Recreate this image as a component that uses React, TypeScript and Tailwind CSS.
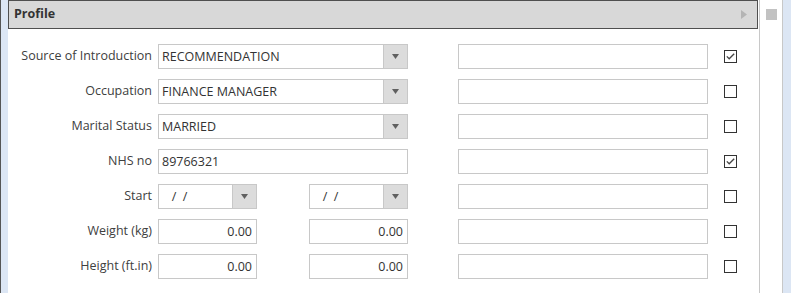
import { ReactNode } from "react";

function Arrow() {
  return (
    <svg width="7" height="5" viewBox="0 0 7 5">
      <path d="M0 0 H7 L3.5 5 Z" fill="#606060" />
    </svg>
  );
}

function Combo({ value, width }: { value: string; width: string }) {
  return (
    <div className={`flex h-[25px] ${width} border border-[#c8c8c8] bg-white`}>
      <div className="flex-1 whitespace-pre pl-[3px] leading-[23px] text-[#333]">{value}</div>
      <div className="flex w-[24px] items-center justify-center border-l border-[#c8c8c8] bg-[#dcdcdc]">
        <Arrow />
      </div>
    </div>
  );
}

function Field({ value = "", right = false, width = "w-[250px]" }: { value?: string; right?: boolean; width?: string }) {
  return (
    <div
      className={`h-[25px] ${width} border border-[#c8c8c8] bg-white leading-[23px] text-[#333] ${
        right ? "pr-[4px] text-right" : "pl-[3px]"
      }`}
    >
      {value}
    </div>
  );
}

function Check({ checked }: { checked?: boolean }) {
  return (
    <div className="flex h-[13px] w-[13px] items-center justify-center border border-[#333] bg-white">
      {checked && (
        <svg width="9" height="7" viewBox="0 0 9 7">
          <path d="M0.8 3.4 L3.2 5.8 L8.2 0.8" stroke="#444" strokeWidth="1.3" fill="none" />
        </svg>
      )}
    </div>
  );
}

function Row({ label, children, checked }: { label: string; children: ReactNode; checked?: boolean }) {
  return (
    <div className="flex h-[25px] items-center">
      <div className="w-[145px] pr-[1px] text-right text-[#404040]">{label}</div>
      <div className="ml-[5px] w-[250px]">{children}</div>
      <div className="ml-[50px]">
        <Field />
      </div>
      <div className="ml-[16px]">
        <Check checked={checked} />
      </div>
    </div>
  );
}

export default function App() {
  return (
    <div
      className="flex h-[293px] w-[791px] overflow-hidden bg-white text-[12.5px]"
      style={{ fontFamily: '"Open Sans", "Liberation Sans", sans-serif' }}
    >
      <div className="w-[8px] border-l border-[#555] bg-[#dce6f4]" />
      <div className="flex w-[750px] flex-col">
        <div className="flex h-[29px] items-center justify-between border border-[#4f4f4f] bg-[#d8d8d8] pl-[5px] pr-[10px]">
          <span className="font-bold text-[#333]">Profile</span>
          <svg width="6" height="9" viewBox="0 0 6 9">
            <path d="M0 0 L6 4.5 L0 9 Z" fill="#b4b4b4" />
          </svg>
        </div>
        <div className="flex flex-col gap-[10px] pt-[15px]">
          <Row label="Source of Introduction" checked>
            <Combo value="RECOMMENDATION" width="w-[250px]" />
          </Row>
          <Row label="Occupation">
            <Combo value="FINANCE MANAGER" width="w-[250px]" />
          </Row>
          <Row label="Marital Status">
            <Combo value="MARRIED" width="w-[250px]" />
          </Row>
          <Row label="NHS no" checked>
            <Field value="89766321" />
          </Row>
          <Row label="Start">
            <div className="flex justify-between">
              <Combo value="   /  /" width="w-[99px]" />
              <Combo value="   /  /" width="w-[99px]" />
            </div>
          </Row>
          <Row label="Weight (kg)">
            <div className="flex justify-between">
              <Field value="0.00" right width="w-[99px]" />
              <Field value="0.00" right width="w-[99px]" />
            </div>
          </Row>
          <Row label="Height (ft.in)">
            <div className="flex justify-between">
              <Field value="0.00" right width="w-[99px]" />
              <Field value="0.00" right width="w-[99px]" />
            </div>
          </Row>
        </div>
      </div>
      <div className="ml-[1px] flex w-[23px] justify-center border-l border-[#c8c8c8] pt-[9px]">
        <div className="h-[11px] w-[11px] bg-[#c2c2c2]" />
      </div>
      <div className="w-[9px] border-l border-[#c8c8c8] bg-[#dce6f4]" />
    </div>
  );
}
